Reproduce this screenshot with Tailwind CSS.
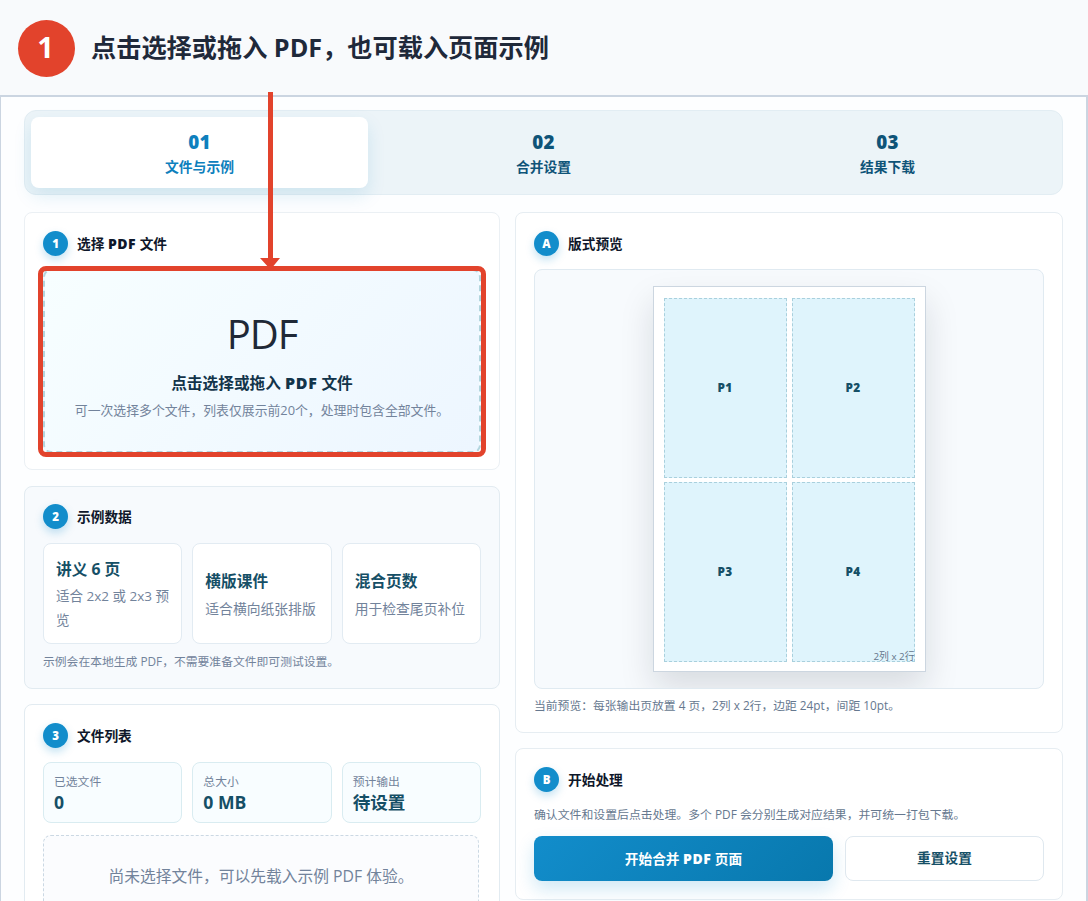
<!DOCTYPE html>
<html lang="zh-CN">
<head>
    <meta charset="UTF-8">
    <meta name="viewport" content="width=device-width, initial-scale=1.0">
    <title>PDF 页面合并</title>
    <script src="https://cdn.jsdelivr.net/npm/@tailwindcss/browser@4"></script>
</head>
<body class="relative h-[901px] overflow-hidden bg-[#f8fafc] font-['Open_Sans','Noto_Sans_CJK_SC',sans-serif] text-[#0f172a]">
    <!-- Étape -->
    <header class="flex h-[95px] items-center gap-4 pl-[18px] pt-[1px]">
        <span class="flex size-[57px] items-center justify-center rounded-full bg-[#e2432c] pr-[2px] pb-1 text-[29px] leading-none font-bold text-white">1</span>
        <h1 class="text-[25.2px] leading-none font-bold whitespace-nowrap text-[#1f293a]">点击选择或拖入 PDF，也可载入页面示例</h1>
    </header>

    <main class="h-[820px] border-t-2 border-r-2 border-l border-[#cbd5e1] bg-[#fdfeff] pt-[13px] pr-[23px] pl-[23px]">
        <!-- Onglets -->
        <nav class="grid h-[85px] grid-cols-3 gap-[7px] rounded-xl border border-[#e2edf3] bg-[#ecf4f8] p-[6px] text-center text-[#0f5478]">
            <div class="flex flex-col items-center rounded-lg bg-white pt-[15px] text-[#0e80bd] shadow-[0_8px_18px_rgba(14,128,189,0.13)]">
                <span class="text-[18.8px] leading-5 font-extrabold tracking-[0.3px]">01</span>
                <span class="mt-[5px] text-[13.8px] leading-5 font-bold">文件与示例</span>
            </div>
            <div class="flex flex-col items-center pt-[15px]">
                <span class="text-[18.8px] leading-5 font-extrabold tracking-[0.3px]">02</span>
                <span class="mt-[5px] text-[13.8px] leading-5 font-bold">合并设置</span>
            </div>
            <div class="flex flex-col items-center pt-[15px]">
                <span class="text-[18.8px] leading-5 font-extrabold tracking-[0.3px]">03</span>
                <span class="mt-[5px] text-[13.8px] leading-5 font-bold">结果下载</span>
            </div>
        </nav>

        <div class="mt-[17px] grid grid-cols-[476px_548px] gap-[15px]">
            <!-- Colonne gauche -->
            <div class="flex flex-col gap-4">
                <section class="h-[258px] rounded-lg border border-[#ebf0f4] bg-white px-[18px] pt-[18px]">
                    <div class="flex h-[25px] items-center gap-[9px]">
                        <span class="flex size-[25px] items-center justify-center rounded-full bg-[#128dcb] text-[11.5px] font-extrabold text-white shadow-[0_4px_9px_rgba(14,140,203,0.25)]">1</span>
                        <h2 class="text-[13.7px] leading-5 font-bold whitespace-nowrap">选择 <span class="text-[14px] font-extrabold tracking-[0.5px]">PDF</span> 文件</h2>
                    </div>
                    <div class="mt-[13px] flex h-[184px] flex-col items-center rounded-lg border-2 border-dashed border-[#b2d5de] bg-linear-135 from-[#f7feff] to-[#edf6ff] pt-[41px] whitespace-nowrap">
                        <span class="text-[40px] leading-[44px] font-normal tracking-[-1px] text-[#1f2937]">PDF</span>
                        <strong class="mt-[15px] text-[15.7px] leading-6 font-bold text-[#12344a]">点击选择或拖入 <span class="text-[16px] font-extrabold tracking-[0.6px]">PDF</span> 文件</strong>
                        <span class="mt-[5px] text-[12.85px] leading-5 text-[#72839b]">可一次选择多个文件，列表仅展示前20个，处理时包含全部文件。</span>
                    </div>
                </section>

                <section class="h-[203px] rounded-lg border border-[#e2ebf1] bg-[#f7fafd] px-[18px] pt-[17px]">
                    <div class="flex h-[25px] items-center gap-[9px]">
                        <span class="flex size-[25px] items-center justify-center rounded-full bg-[#128dcb] text-[11.5px] font-extrabold text-white shadow-[0_4px_9px_rgba(14,140,203,0.25)]">2</span>
                        <h2 class="text-[13.7px] leading-5 font-bold">示例数据</h2>
                    </div>
                    <div class="mt-[14px] grid h-[101px] grid-cols-3 gap-[10px]">
                        <div class="flex flex-col justify-center rounded-lg border border-[#e2ebf2] bg-white pt-[2px] pr-[6px] pl-3">
                            <strong class="text-[15.7px] leading-6 font-bold text-[#154f66]">讲义 6 页</strong>
                            <span class="mt-1 text-[13.5px] leading-[23.5px] text-[#72839b]">适合 2x2 或 2x3 预览</span>
                        </div>
                        <div class="flex flex-col justify-center rounded-lg border border-[#e2ebf2] bg-white px-3 pt-[2px]">
                            <strong class="text-[15.7px] leading-6 font-bold text-[#154f66]">横版课件</strong>
                            <span class="mt-1 text-[13.8px] leading-[23.5px] whitespace-nowrap text-[#72839b]">适合横向纸张排版</span>
                        </div>
                        <div class="flex flex-col justify-center rounded-lg border border-[#e2ebf2] bg-white px-3 pt-[2px]">
                            <strong class="text-[15.7px] leading-6 font-bold text-[#154f66]">混合页数</strong>
                            <span class="mt-1 text-[13.8px] leading-[23.5px] whitespace-nowrap text-[#72839b]">用于检查尾页补位</span>
                        </div>
                    </div>
                    <p class="mt-[7px] text-[11.8px] leading-5 whitespace-nowrap text-[#72839b]">示例会在本地生成 PDF，不需要准备文件即可测试设置。</p>
                </section>

                <section class="-mt-px h-[240px] rounded-lg border border-[#e2ebf1] bg-white px-[18px] pt-[18px]">
                    <div class="flex h-[25px] items-center gap-[9px]">
                        <span class="flex size-[25px] items-center justify-center rounded-full bg-[#128dcb] text-[11.5px] font-extrabold text-white shadow-[0_4px_9px_rgba(14,140,203,0.25)]">3</span>
                        <h2 class="text-[13.7px] leading-5 font-bold">文件列表</h2>
                    </div>
                    <div class="mt-[14px] grid h-[61px] grid-cols-3 gap-[10px]">
                        <div class="flex flex-col rounded-lg border border-[#d9ecf1] bg-[#f8fdff] px-[10px] pt-[9px]">
                            <span class="text-[11.8px] leading-[18px] text-[#72839b]">已选文件</span>
                            <strong class="mt-px text-[17.6px] leading-[22px] font-bold text-[#154f66]">0</strong>
                        </div>
                        <div class="flex flex-col rounded-lg border border-[#d9ecf1] bg-[#f8fdff] px-[10px] pt-[9px]">
                            <span class="text-[11.8px] leading-[18px] text-[#72839b]">总大小</span>
                            <strong class="mt-px text-[17.6px] leading-[22px] font-bold text-[#154f66]">0 MB</strong>
                        </div>
                        <div class="flex flex-col rounded-lg border border-[#d9ecf1] bg-[#f8fdff] px-[10px] pt-[9px]">
                            <span class="text-[11.8px] leading-[18px] text-[#72839b]">预计输出</span>
                            <strong class="mt-px text-[17.6px] leading-[22px] font-bold text-[#154f66]">待设置</strong>
                        </div>
                    </div>
                    <div class="mt-3 mr-[2px] flex h-[83px] items-center justify-center rounded-lg border border-dashed border-[#cbd8e3] bg-[#fbfcfe] text-[15.75px] whitespace-nowrap text-[#72839b]">尚未选择文件，可以先载入示例 PDF 体验。</div>
                </section>
            </div>

            <!-- Colonne droite -->
            <div class="flex flex-col gap-4">
                <section class="h-[521px] rounded-lg border border-[#e6edf2] bg-white px-[18px] pt-[18px]">
                    <div class="flex h-[25px] items-center gap-[9px]">
                        <span class="flex size-[25px] items-center justify-center rounded-full bg-[#128dcb] text-[11.5px] font-extrabold text-white shadow-[0_4px_9px_rgba(14,140,203,0.25)]">A</span>
                        <h2 class="text-[13.7px] leading-5 font-bold">版式预览</h2>
                    </div>
                    <div class="mt-[13px] flex h-[420px] justify-center overflow-hidden rounded-lg border border-[#e0eaf1] bg-[#f7fafd] pt-4">
                        <!-- Feuille -->
                        <div class="relative grid h-[386px] w-[273px] grid-cols-2 grid-rows-[180px_180px] gap-x-[5px] gap-y-1 border border-[#ccd6e0] bg-white px-[10px] pt-[11px] pb-[9px] text-[11.8px] font-extrabold tracking-[0.3px] text-[#154f66] shadow-[0_16px_32px_rgba(15,23,42,0.13)]">
                            <div class="flex items-center justify-center border border-dashed border-[#a9d0dd] bg-[#dff4fc]">P1</div>
                            <div class="flex items-center justify-center border border-dashed border-[#a9d0dd] bg-[#dff4fc]">P2</div>
                            <div class="flex items-center justify-center border border-dashed border-[#a9d0dd] bg-[#dff4fc]">P3</div>
                            <div class="flex items-center justify-center border border-dashed border-[#a9d0dd] bg-[#dff4fc]">P4</div>
                            <span class="absolute right-[10px] bottom-[7px] text-[9.8px] leading-[14px] font-normal tracking-normal text-[#64748b]">2列 x 2行</span>
                        </div>
                    </div>
                    <p class="mt-[6px] text-[11.8px] leading-5 whitespace-nowrap text-[#66788f]">当前预览：每张输出页放置 4 页，2列 x 2行，边距 24pt，间距 10pt。</p>
                </section>

                <section class="-mt-px h-[152px] rounded-lg border border-[#e6edf2] bg-white px-[18px] pt-[18px]">
                    <div class="flex h-[25px] items-center gap-[9px]">
                        <span class="flex size-[25px] items-center justify-center rounded-full bg-[#128dcb] text-[11.5px] font-extrabold text-white shadow-[0_4px_9px_rgba(14,140,203,0.25)]">B</span>
                        <h2 class="text-[13.7px] leading-5 font-bold">开始处理</h2>
                    </div>
                    <p class="mt-3 text-[11.87px] leading-5 whitespace-nowrap text-[#66788f]">确认文件和设置后点击处理。多个 PDF 会分别生成对应结果，并可统一打包下载。</p>
                    <div class="mt-3 grid h-[45px] grid-cols-[299px_199px] gap-3 text-[13.7px] font-bold">
                        <button class="rounded-lg bg-linear-135 from-[#128dcb] to-[#0878ad] text-white shadow-[0_8px_18px_rgba(14,140,203,0.2)]">开始合并 <span class="text-[14px] font-extrabold tracking-[0.5px]">PDF</span> 页面</button>
                        <button class="rounded-lg border border-[#dfe8ef] bg-white text-[#154f66]">重置设置</button>
                    </div>
                </section>
            </div>
        </div>
    </main>

    <!-- Flèche et cadre -->
    <div class="absolute top-[266px] left-[38px] h-[191px] w-[448px] rounded-lg border-5 border-[#e2432c]"></div>
    <svg class="absolute top-[92px] left-[260px]" width="20" height="178" viewBox="0 0 20 178" fill="#e2432c">
        <path d="M8 0h5v166h7l-9 11h-1L0 166h8z" />
    </svg>
</body>
</html>
